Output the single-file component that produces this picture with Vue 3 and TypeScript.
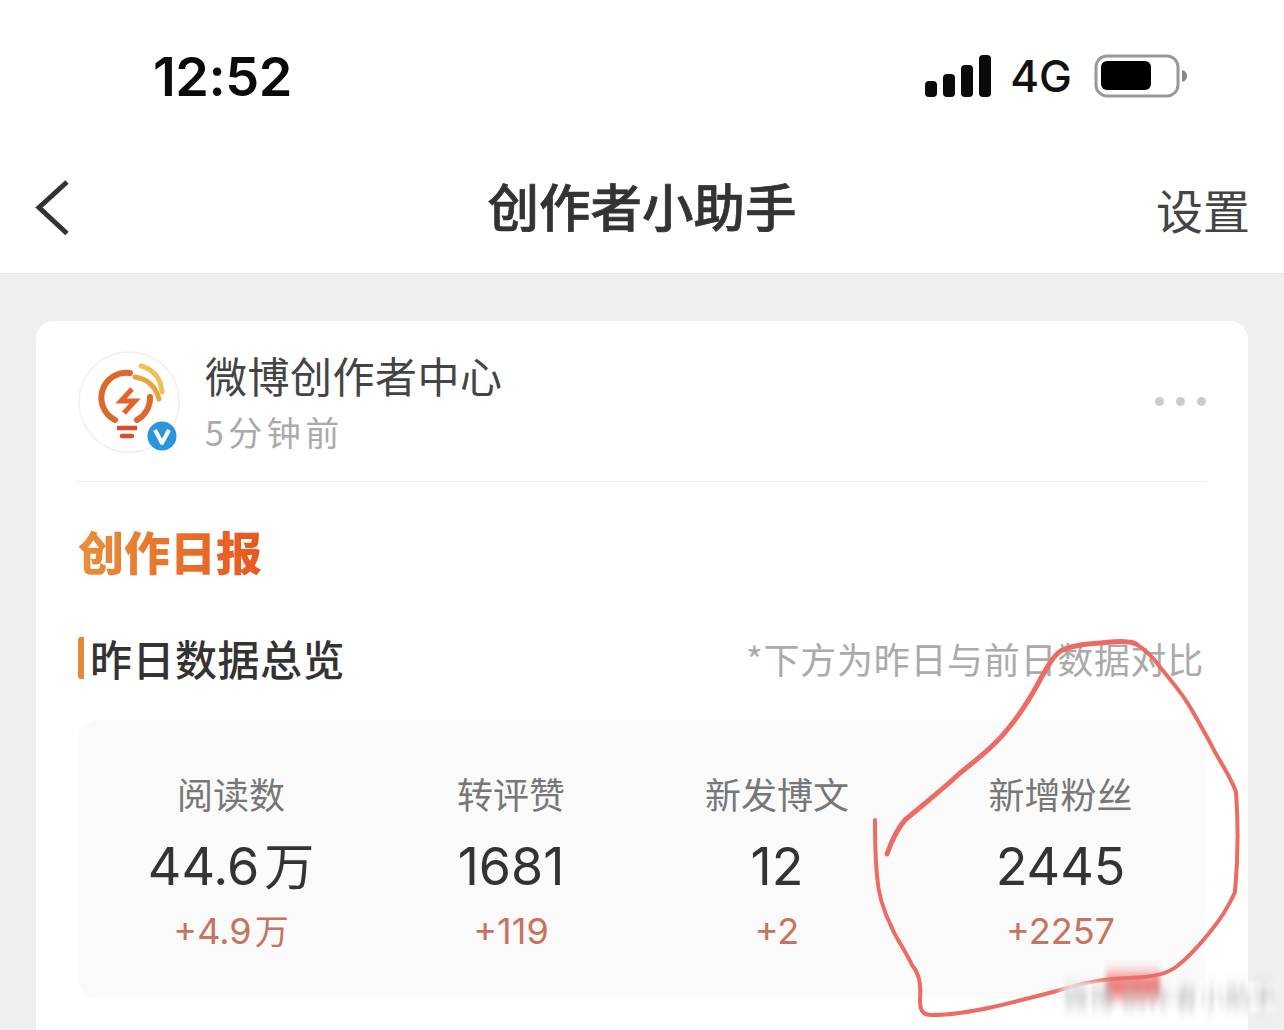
<script setup lang="ts">
interface Stat {
  label: string;
  value: string;
  delta: string;
  unit?: string;
}

const stats: Stat[] = [
  { label: "阅读数", value: "44.6", delta: "+4.9", unit: "万" },
  { label: "转评赞", value: "1681", delta: "+119" },
  { label: "新发博文", value: "12", delta: "+2" },
  { label: "新增粉丝", value: "2445", delta: "+2257" },
];

const signalBars = [
  { x: 0, y: 26, h: 16 },
  { x: 18, y: 19, h: 23 },
  { x: 36, y: 10, h: 32 },
  { x: 54, y: 0, h: 42 },
];
</script>

<template>
  <div class="page">
    <header class="status-bar">
      <span class="time">12:52</span>
      <div class="status-right">
        <svg class="signal" width="66" height="42" viewBox="0 0 66 42">
          <rect
            v-for="bar in signalBars"
            :key="bar.x"
            :x="bar.x"
            :y="bar.y"
            width="12"
            :height="bar.h"
            rx="4"
            fill="#0a0a0a"
          />
        </svg>
        <span class="network">4G</span>
        <svg class="battery" width="94" height="44" viewBox="0 0 94 44">
          <rect x="2" y="2" width="82" height="40" rx="11" fill="none" stroke="#999" stroke-width="3" />
          <rect x="7" y="7" width="50" height="29" rx="6" fill="#000" />
          <path d="M88 16c4 1 5 4 5 6s-1 5-5 6z" fill="#888" />
        </svg>
      </div>
    </header>

    <nav class="nav-bar">
      <svg class="back" width="36" height="58" viewBox="0 0 36 58">
        <path d="M33 3 5 28.5l28 26" fill="none" stroke="#333" stroke-width="5" />
      </svg>
      <h1 class="nav-title">创作者小助手</h1>
      <span class="nav-action">设置</span>
    </nav>

    <main class="content">
      <section class="card">
        <div class="card-head">
          <svg class="avatar" width="102" height="102" viewBox="0 0 102 102">
            <circle cx="51" cy="51" r="50" fill="#fff" stroke="#f0f0f0" stroke-width="1.5" />
            <path d="M52 22a25 25 0 0 0-15 47" fill="none" stroke="#d9692e" stroke-width="6" stroke-linecap="round" />
            <path d="M72 46a25 25 0 0 1-13 23" fill="none" stroke="#dd6a2d" stroke-width="6" stroke-linecap="round" />
            <path d="M57 26q19 3 24 22" fill="none" stroke="#e5a63e" stroke-width="5" stroke-linecap="round" />
            <path d="M63 15q19 5 21 26" fill="none" stroke="#eec05a" stroke-width="5" stroke-linecap="round" />
            <path d="M54 38 43 50h14L46 62" fill="none" stroke="#e2622b" stroke-width="5" />
            <path d="M39 77h20" stroke="#d94f2b" stroke-width="4.5" />
            <path d="M44 85h10" stroke="#d94f2b" stroke-width="4.5" stroke-linecap="round" />
            <circle cx="84" cy="85" r="16" fill="#fff" />
            <circle cx="84" cy="85" r="14.5" fill="#2a94dd" />
            <path d="m77 79 7 13 7-13" fill="none" stroke="#fff" stroke-width="4" stroke-linejoin="round" />
          </svg>
          <div class="author">
            <span class="author-name">微博创作者中心</span>
            <span class="author-time">5分钟前</span>
          </div>
          <div class="more">
            <i></i>
            <i></i>
            <i></i>
          </div>
        </div>

        <h2 class="daily-title">创作日报</h2>

        <div class="section-head">
          <span class="section-title">昨日数据总览</span>
          <span class="section-note">*下方为昨日与前日数据对比</span>
        </div>

        <div class="stats">
          <div v-for="stat in stats" :key="stat.label" class="stat">
            <span class="stat-label">{{ stat.label }}</span>
            <span class="stat-value">{{ stat.value }}<small v-if="stat.unit">{{ stat.unit }}</small></span>
            <span class="stat-delta">{{ stat.delta }}<small v-if="stat.unit">{{ stat.unit }}</small></span>
          </div>
        </div>
      </section>
    </main>

    <svg class="scribble" width="1284" height="1030" viewBox="0 0 1284 1030">
      <defs>
        <filter id="smear" x="-10%" y="-80%" width="120%" height="260%">
          <feGaussianBlur stdDeviation="2 7" />
        </filter>
        <filter id="haze" x="-20%" y="-60%" width="140%" height="220%">
          <feGaussianBlur stdDeviation="4 2" />
        </filter>
      </defs>
      <path
        class="scribble-line"
        d="M875 820C875 838 875 855 877 875C878 895 884 912 892 928C897 940 905 950 912 965C920 975 921 985 920 1000C920 1010 922 1015 932 1015C950 1015 970 1012 993 1007C1010 1003 1030 998 1053 992C1085 982 1105 979 1130 978C1150 977 1165 975 1176 967C1188 958 1198 947 1210 932C1220 920 1228 908 1235 892C1238 860 1238 820 1236 792C1232 780 1224 768 1215 752C1208 738 1203 730 1193 712C1182 692 1172 682 1160 667C1152 656 1146 650 1136 644"
        stroke-width="4"
      />
      <path
        class="scribble-line"
        d="M887 854C892 840 898 828 905 820C925 803 942 790 960 773C980 757 995 745 1007 730C1022 712 1032 695 1040 680C1048 665 1054 655 1062 650C1075 645 1085 644 1100 643C1115 641 1128 640 1136 644"
        stroke-width="5"
      />
      <rect x="1062" y="982" width="210" height="30" fill="#fff" opacity="0.8" filter="url(#haze)" />
      <rect x="1106" y="974" width="54" height="24" fill="#ef6b66" opacity="0.9" filter="url(#smear)" />
      <text class="watermark" x="1063" y="1007" filter="url(#smear)">微博 创作者小助手</text>
    </svg>
  </div>
</template>

<style>
html,
body {
  margin: 0;
  background: #efefef;
}
</style>

<style scoped>
.page {
  position: relative;
  width: 1284px;
  height: 1030px;
  overflow: hidden;
  background: #efefef;
  font-family: "Noto Sans CJK SC", "Noto Sans", sans-serif;
}

.status-bar {
  display: flex;
  align-items: center;
  justify-content: space-between;
  height: 152px;
  box-sizing: border-box;
  padding: 0 96px 0 153px;
  background: #fff;
}

.time {
  font-family: Inter, "Liberation Sans", sans-serif;
  font-size: 54px;
  font-weight: 600;
  color: #0a0a0a;
  letter-spacing: -0.5px;
}

.status-right {
  display: flex;
  align-items: center;
  gap: 19px;
}

.network {
  font-family: Inter, "Liberation Sans", sans-serif;
  font-size: 44px;
  font-weight: 500;
  color: #111;
}

.battery {
  margin-left: 3px;
}

.nav-bar {
  display: grid;
  grid-template-columns: 1fr auto 1fr;
  align-items: center;
  height: 122px;
  box-sizing: border-box;
  padding: 0 34px;
  background: #fff;
  border-bottom: 1px solid #e6e6e6;
}

.back {
  margin-bottom: 10px;
}

.nav-title {
  margin: 0 0 16px;
  font-size: 51.5px;
  font-weight: 500;
  -webkit-text-stroke: 0.7px #333;
  color: #333;
  line-height: 1;
}

.nav-action {
  justify-self: end;
  margin-bottom: 8px;
  font-size: 47px;
  color: #444;
  line-height: 1;
}

.content {
  padding: 47px 36px 0;
}

.card {
  height: 760px;
  box-sizing: border-box;
  padding: 30px 42px 0;
  background: #fff;
  border-radius: 18px;
}

.card-head {
  display: flex;
  align-items: center;
  gap: 25px;
  height: 131px;
  box-sizing: border-box;
  padding-bottom: 29px;
  margin: 0 0 0 -3px;
  padding-left: 3px;
  border-bottom: 1px solid #eee;
}

.author {
  display: flex;
  flex-direction: column;
  gap: 11px;
}

.author-name {
  font-size: 42px;
  letter-spacing: 0.5px;
  line-height: 50px;
  color: #444;
}

.author-time {
  font-size: 34px;
  letter-spacing: 4.5px;
  line-height: 42px;
  color: #aaa;
}

.more {
  display: flex;
  gap: 12px;
  margin-left: auto;
}

.more i {
  width: 9px;
  height: 9px;
  border-radius: 50%;
  background: #ccc;
}

.daily-title {
  margin: 38px 0 0;
  width: max-content;
  font-size: 46px;
  font-weight: 900;
  line-height: 60px;
  background: linear-gradient(90deg, #e8903a, #e9561f);
  -webkit-background-clip: text;
  background-clip: text;
  color: transparent;
}

.section-head {
  display: flex;
  align-items: center;
  justify-content: space-between;
  margin-top: 48px;
  height: 60px;
}

.section-title {
  padding-left: 6px;
  border-left: 6px solid #e28a35;
  border-radius: 3px;
  font-size: 42px;
  font-weight: 500;
  letter-spacing: 0.5px;
  line-height: 42px;
  color: #333;
}

.section-note {
  margin-right: 2px;
  font-size: 36px;
  letter-spacing: 0.7px;
  line-height: 42px;
  color: #aaa;
}

.stats {
  display: grid;
  grid-template-columns: 306px 254px 278px 1fr;
  width: 1127px;
  height: 278px;
  margin-top: 32px;
  background: #fafafa;
  border-radius: 20px;
}

.stat {
  display: flex;
  flex-direction: column;
  align-items: center;
  padding-top: 48px;
}

.stat-label {
  font-size: 36px;
  line-height: 50px;
  color: #777;
}

.stat-value {
  margin-top: 16px;
  font-family: Inter, "Noto Sans CJK SC", sans-serif;
  font-size: 52px;
  line-height: 66px;
  color: #333;
}

.stat-value small {
  margin-left: 5px;
  font-size: 50px;
}

.stat-delta {
  margin-top: 8px;
  font-family: Inter, "Noto Sans CJK SC", sans-serif;
  font-size: 36px;
  line-height: 46px;
  color: #c4745f;
}

.stat-delta small {
  margin-left: 3px;
  font-size: 34px;
}

.scribble {
  position: absolute;
  top: 0;
  left: 0;
  pointer-events: none;
}

.scribble-line {
  fill: none;
  stroke: #ec6b64;
  stroke-linecap: round;
  stroke-linejoin: round;
}

.watermark {
  font-size: 26px;
  fill: #b5b5b5;
}
</style>
